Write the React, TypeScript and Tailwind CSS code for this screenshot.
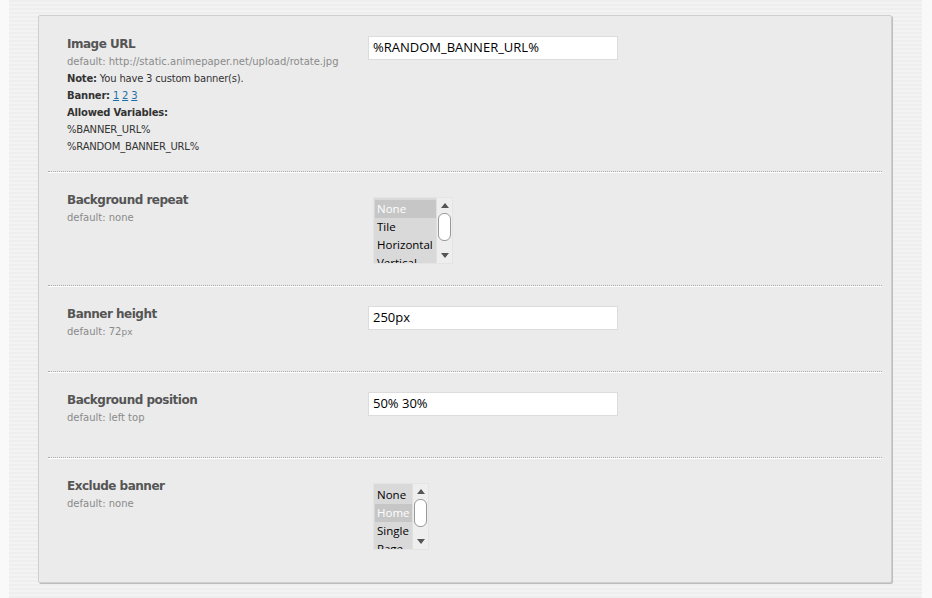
import React from 'react'

const label = "font-['DejaVu_Sans',sans-serif]"

function Field({ title, hint, children }: { title: string; hint: React.ReactNode; children?: React.ReactNode }) {
  return (
    <div className={`${label} pl-[19px]`}>
      <div className="text-[12px] leading-[17px] font-bold text-[#555] tracking-[-0.5px]">{title}</div>
      <div className="text-[10px] leading-[17px] text-[#8a8a8a]">{hint}</div>
      {children}
    </div>
  )
}

function TextInput({ value }: { value: string }) {
  return (
    <div className="w-[250px] h-[24px] bg-white border border-[#dcdcdc] pl-[4px] flex items-center font-['Open_Sans',sans-serif] text-[13px] text-black">
      {value}
    </div>
  )
}

function Arrow({ up }: { up?: boolean }) {
  return (
    <div className="h-[15px] flex items-center justify-center">
      <svg width="8" height="5" viewBox="0 0 8 5">
        <polygon points={up ? '4,0 8,5 0,5' : '0,0 8,0 4,5'} fill="#555" />
      </svg>
    </div>
  )
}

function ListBox({ items, selected, width }: { items: string[]; selected: number; width: string }) {
  return (
    <div className={`${width} h-[67px] my-[5px] ml-[5px] border border-[#e4e4e4] bg-[#d9d9d9] flex font-['Open_Sans',sans-serif] text-[11.5px]`}>
      <div className="flex-1 overflow-hidden pt-[2px] pl-[1px]">
        {items.map((it, i) => (
          <div
            key={it}
            className={`h-[18px] leading-[18px] pl-[2px] ${i === selected ? 'bg-[#c6c6c6] text-white' : 'text-black'}`}
          >
            {it}
          </div>
        ))}
      </div>
      <div className="w-[16px] bg-[#eeeeee] border-l border-[#e0e0e0] flex flex-col items-center">
        <Arrow up />
        <div className="w-[13px] h-[28px] bg-white border border-[#999] rounded-[6px]" />
        <div className="flex-1" />
        <Arrow />
      </div>
    </div>
  )
}

function Row({ children, last }: { children: React.ReactNode; last?: boolean }) {
  return (
    <div
      className={`flex pt-5 pb-4 min-h-[86px] ${last ? '' : 'border-b border-dotted border-[#a8a8a8] shadow-[0_1px_0_#ffffff]'}`}
    >
      {children}
    </div>
  )
}

export default function App() {
  return (
    <div className="h-[598px] w-[932px] flex bg-[#f9f9f9]">
      <div className="ml-[9px] w-[913px] h-full bg-[repeating-linear-gradient(180deg,#eeeeee_0px,#eeeeee_2px,#f3f3f3_2px,#f3f3f3_4px)] pt-[15px] pl-[29px]">
        <div className="w-[854px] h-[568px] bg-[#ebebeb] border border-[#cfcfcf] rounded-[2px] shadow-[1px_1px_0_#bdbdbd] px-[9px]">
          <Row>
            <div className="w-[320px]">
              <Field title="Image URL" hint="default: http://static.animepaper.net/upload/rotate.jpg">
                <div className="text-[10px] leading-[17px] text-[#333] tracking-[-0.2px]">
                  <div>
                    <b>Note:</b> You have 3 custom banner(s).
                  </div>
                  <div>
                    <b>Banner:</b>{' '}
                    <span className="text-[#1a70a6] underline">1</span>{' '}
                    <span className="text-[#1a70a6] underline">2</span>{' '}
                    <span className="text-[#1a70a6] underline">3</span>
                  </div>
                  <div className="font-bold">Allowed Variables:</div>
                  <div>%BANNER_URL%</div>
                  <div>%RANDOM_BANNER_URL%</div>
                </div>
              </Field>
            </div>
            <div>
              <TextInput value="%RANDOM_BANNER_URL%" />
            </div>
          </Row>
          <Row>
            <div className="w-[320px]">
              <Field title="Background repeat" hint="default: none" />
            </div>
            <ListBox items={['None', 'Tile', 'Horizontal', 'Vertical']} selected={0} width="w-[80px]" />
          </Row>
          <Row>
            <div className="w-[320px]">
              <Field
                title="Banner height"
                hint={
                  <>
                    default: 72<span className="text-[9px]">px</span>
                  </>
                }
              />
            </div>
            <div>
              <TextInput value="250px" />
            </div>
          </Row>
          <Row>
            <div className="w-[320px]">
              <Field title="Background position" hint="default: left top" />
            </div>
            <div>
              <TextInput value="50% 30%" />
            </div>
          </Row>
          <Row last>
            <div className="w-[320px]">
              <Field title="Exclude banner" hint="default: none" />
            </div>
            <ListBox items={['None', 'Home', 'Single', 'Page']} selected={1} width="w-[56px]" />
          </Row>
        </div>
      </div>
    </div>
  )
}
